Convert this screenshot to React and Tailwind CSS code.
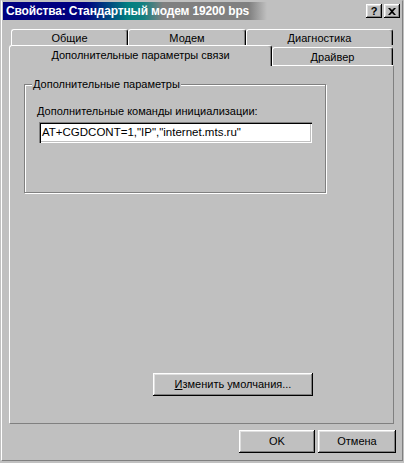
import React from "react";

const raised =
  "bg-[#c0c0c0] shadow-[inset_-1px_-1px_#000,inset_1px_1px_#fff,inset_-2px_-2px_#808080,inset_2px_2px_#dfdfdf]";

function Tab({ label, className = "" }) {
  return (
    <div
      className={`flex items-center justify-center bg-[#c0c0c0] border-t border-l border-white rounded-t-[3px] shadow-[inset_-1px_0_#808080] border-r border-r-black ${className}`}
    >
      {label}
    </div>
  );
}

function Button({ children, className = "" }) {
  return (
    <button className={`flex items-center justify-center text-[11px] text-black ${raised} ${className}`}>
      {children}
    </button>
  );
}

export default function App() {
  return (
    <div className="w-[404px] h-[463px] bg-[#c0c0c0] overflow-hidden font-['Liberation_Sans',Arial,sans-serif] text-[11px] text-black">
      <div className="ml-[1px] w-[402px] h-[461px] border border-t-[#c0c0c0] border-l-white border-r-[#808080] border-b-[#808080] p-[1px] flex flex-col">
        {/* Title bar */}
        <div className="h-[18px] flex items-center bg-[linear-gradient(to_right,#000080_0px,#000080_82px,#008080_125px,#118080_140px,#808080_160px,#808080_246px,#c0c0c0_264px)]">
          <span className="pl-[3px] text-white font-bold text-[12px] tracking-[-0.15px] leading-none whitespace-nowrap">
            Свойства: Стандартный модем 19200 bps
          </span>
          <div className="ml-auto mr-[1px] flex gap-[2px]">
            <div className={`w-[16px] h-[14px] flex items-center justify-center font-bold text-[11px] leading-none ${raised}`}>
              ?
            </div>
            <div className={`w-[16px] h-[14px] flex items-center justify-center ${raised}`}>
              <svg width="8" height="7" viewBox="0 0 8 7">
                <path d="M0 0h2l2 2 2-2h2L5 3.5 8 7H6L4 5 2 7H0l3-3.5z" fill="#000" />
              </svg>
            </div>
          </div>
        </div>

        {/* Tabs */}
        <div className="mt-[9px] ml-[6px] w-[385px] flex flex-col">
          <div className="h-[16px] pl-[2px] flex">
            <Tab label="Общие" className="w-[117px] pt-[2px]" />
            <Tab label="Модем" className="w-[118px] pt-[2px]" />
            <Tab label="Диагностика" className="w-[147px] pt-[2px]" />
          </div>
          <div className="h-[20px] flex items-start">
            <Tab
              label="Дополнительные параметры связи"
              className="w-[263px] h-[21px] relative z-10 pb-[2px]"
            />
            <Tab label="Драйвер" className="w-[121px] h-[18px] mt-[2px] pt-[2px]" />
          </div>

          {/* Panel */}
          <div className="h-[359px] border-t border-l border-white border-r border-b border-r-[#808080] border-b-[#808080] flex flex-col">
            <div className="relative ml-[14px] mt-[18px] w-[302px] h-[109px] border border-[#808080] shadow-[inset_1px_1px_#fff,1px_1px_#fff] pt-[20px] pl-[12px]">
              <span className="absolute -top-[7px] left-[7px] bg-[#c0c0c0] px-[1px] leading-[13px]">
                Дополнительные параметры
              </span>
              <div className="leading-[13px]">Дополнительные команды инициализации:</div>
              <div className="mt-[4px] ml-[2px] w-[273px] h-[21px] bg-white flex items-center pl-[3px] text-[11.5px] shadow-[inset_1px_1px_#808080,inset_2px_2px_#000,inset_-1px_-1px_#fff,inset_-2px_-2px_#c0c0c0]">
                AT+CGDCONT=1,"IP","internet.mts.ru"
              </div>
            </div>

            <Button className="mt-[180px] ml-[143px] w-[160px] h-[23px]">
              <span>
                <span className="underline">И</span>зменить умолчания...
              </span>
            </Button>
          </div>
        </div>

        {/* Bottom buttons */}
        <div className="mt-[6px] flex pl-[236px] gap-[3px]">
          <Button className="w-[76px] h-[23px]">OK</Button>
          <Button className="w-[78px] h-[23px]">Отмена</Button>
        </div>
      </div>
    </div>
  );
}
